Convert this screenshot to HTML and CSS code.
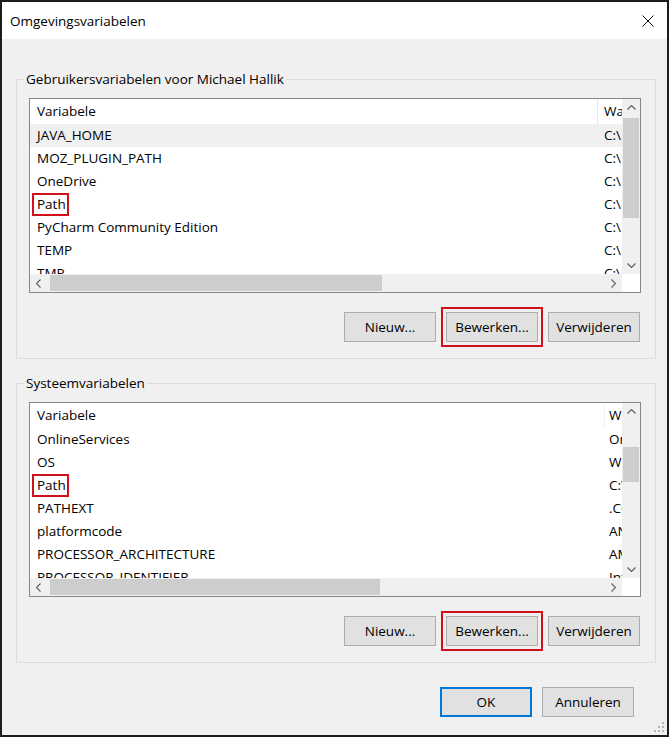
FILE: index.html
```html
<!DOCTYPE html>
<html lang="nl">
<head>
<meta charset="utf-8">
<title>Omgevingsvariabelen</title>
<link rel="stylesheet" href="styles.css">
</head>
<body>
<div class="window">
  <div class="titlebar">
    <span class="title">Omgevingsvariabelen</span>
    <svg class="close" width="12" height="12" viewBox="0 0 12 12"><path d="M0.5 0.5 L11.5 11.5 M11.5 0.5 L0.5 11.5" stroke="#111" stroke-width="1" fill="none"/></svg>
  </div>
  <div class="content">
    <fieldset class="group">
      <legend>Gebruikersvariabelen voor Michael Hallik</legend>
      <div class="list">
        <div class="list-body">
          <div class="row header user"><span class="c1">Variabele</span><span class="c2">Waarde</span></div>
          <div class="row user sel"><span class="c1">JAVA_HOME</span><span class="c2">C:\Program</span></div>
          <div class="row user"><span class="c1">MOZ_PLUGIN_PATH</span><span class="c2">C:\Program</span></div>
          <div class="row user"><span class="c1">OneDrive</span><span class="c2">C:\Users</span></div>
          <div class="row user"><span class="c1"><span class="mark">Path</span></span><span class="c2">C:\Users</span></div>
          <div class="row user"><span class="c1">PyCharm Community Edition</span><span class="c2">C:\Program</span></div>
          <div class="row user"><span class="c1">TEMP</span><span class="c2">C:\Users</span></div>
          <div class="row user"><span class="c1">TMP</span><span class="c2">C:\Users</span></div>
        </div>
        <div class="vscroll">
          <div class="arrow"><svg width="9" height="5" viewBox="0 0 9 5"><polyline points="0.5,4.5 4.5,0.5 8.5,4.5" fill="none" stroke="#606060" stroke-width="1.2"/></svg></div>
          <div class="vtrack"><div class="vthumb thumb-user"></div></div>
          <div class="arrow"><svg width="9" height="5" viewBox="0 0 9 5"><polyline points="0.5,0.5 4.5,4.5 8.5,0.5" fill="none" stroke="#606060" stroke-width="1.2"/></svg></div>
        </div>
        <div class="hscroll">
          <div class="arrow"><svg width="5" height="9" viewBox="0 0 5 9"><polyline points="4.5,0.5 0.5,4.5 4.5,8.5" fill="none" stroke="#606060" stroke-width="1.2"/></svg></div>
          <div class="htrack"><div class="hthumb thumb-h-user"></div></div>
          <div class="arrow"><svg width="5" height="9" viewBox="0 0 5 9"><polyline points="0.5,0.5 4.5,4.5 0.5,8.5" fill="none" stroke="#606060" stroke-width="1.2"/></svg></div>
        </div>
        <div class="corner"></div>
      </div>
      <div class="btnrow">
        <button class="btn">Nieuw...</button>
        <button class="btn marked">Bewerken...</button>
        <button class="btn">Verwijderen</button>
      </div>
    </fieldset>

    <fieldset class="group group-sys">
      <legend>Systeemvariabelen</legend>
      <div class="list">
        <div class="list-body">
          <div class="row header sys"><span class="c1">Variabele</span><span class="c2">Waarde</span></div>
          <div class="row sys"><span class="c1">OnlineServices</span><span class="c2">Online</span></div>
          <div class="row sys"><span class="c1">OS</span><span class="c2">Windows_NT</span></div>
          <div class="row sys"><span class="c1"><span class="mark">Path</span></span><span class="c2">C:\WINDOWS</span></div>
          <div class="row sys"><span class="c1">PATHEXT</span><span class="c2">.COM;.EXE</span></div>
          <div class="row sys"><span class="c1">platformcode</span><span class="c2">AN</span></div>
          <div class="row sys"><span class="c1">PROCESSOR_ARCHITECTURE</span><span class="c2">AMD64</span></div>
          <div class="row sys"><span class="c1">PROCESSOR_IDENTIFIER</span><span class="c2">Intel64</span></div>
        </div>
        <div class="vscroll">
          <div class="arrow"><svg width="9" height="5" viewBox="0 0 9 5"><polyline points="0.5,4.5 4.5,0.5 8.5,4.5" fill="none" stroke="#606060" stroke-width="1.2"/></svg></div>
          <div class="vtrack"><div class="vthumb thumb-sys"></div></div>
          <div class="arrow"><svg width="9" height="5" viewBox="0 0 9 5"><polyline points="0.5,0.5 4.5,4.5 8.5,0.5" fill="none" stroke="#606060" stroke-width="1.2"/></svg></div>
        </div>
        <div class="hscroll">
          <div class="arrow"><svg width="5" height="9" viewBox="0 0 5 9"><polyline points="4.5,0.5 0.5,4.5 4.5,8.5" fill="none" stroke="#606060" stroke-width="1.2"/></svg></div>
          <div class="htrack"><div class="hthumb thumb-h-sys"></div></div>
          <div class="arrow"><svg width="5" height="9" viewBox="0 0 5 9"><polyline points="0.5,0.5 4.5,4.5 0.5,8.5" fill="none" stroke="#606060" stroke-width="1.2"/></svg></div>
        </div>
        <div class="corner"></div>
      </div>
      <div class="btnrow">
        <button class="btn">Nieuw...</button>
        <button class="btn marked">Bewerken...</button>
        <button class="btn">Verwijderen</button>
      </div>
    </fieldset>

    <div class="dialog-buttons">
      <button class="btn default">OK</button>
      <button class="btn">Annuleren</button>
    </div>
  </div>
  <svg class="grip" width="10" height="10" viewBox="0 0 10 10">
    <rect x="8" y="0" width="2" height="2" fill="#b5b5b5"/>
    <rect x="4" y="4" width="2" height="2" fill="#b5b5b5"/>
    <rect x="8" y="4" width="2" height="2" fill="#b5b5b5"/>
    <rect x="0" y="8" width="2" height="2" fill="#b5b5b5"/>
    <rect x="4" y="8" width="2" height="2" fill="#b5b5b5"/>
    <rect x="8" y="8" width="2" height="2" fill="#b5b5b5"/>
  </svg>
</div>
</body>
</html>
```

FILE: styles.css
```css
* { box-sizing: border-box; }

html, body {
  margin: 0;
  padding: 0;
  background: #ffffff;
}

body {
  font-family: "Segoe UI", "Open Sans", "Noto Sans", sans-serif;
  font-size: 13.5px;
  color: #000;
}

.window {
  position: relative;
  width: 669px;
  height: 737px;
  border: 2px solid #1c1c1c;
  background: #f0f0f0;
  display: flex;
  flex-direction: column;
}

.titlebar {
  height: 37px;
  flex: 0 0 37px;
  background: #ffffff;
  display: flex;
  align-items: center;
  justify-content: space-between;
  padding: 0 13px 0 8px;
}

.title {
  font-size: 13.5px;
}

.close {
  display: block;
}

.content {
  padding: 31px 11px 0 14px;
  display: flex;
  flex-direction: column;
}

.group {
  margin: 0;
  border: 1px solid #dcdcdc;
  padding: 10px 14px 16px 12px;
  min-inline-size: 0;
}

.group-sys {
  margin-top: 15px;
}

.group legend {
  padding: 0 2px;
  margin-left: -5px;
  line-height: 18px;
  height: 18px;
}

.list {
  height: 195px;
  border: 1px solid #828790;
  background: #ffffff;
  display: grid;
  grid-template-columns: 1fr 18px;
  grid-template-rows: 1fr 18px;
}

.list-body {
  overflow: hidden;
  min-width: 0;
}

.row {
  display: grid;
  height: 23px;
  line-height: 23px;
  white-space: nowrap;
}

.row.user { grid-template-columns: 568px 1fr; }
.row.sys { grid-template-columns: 575px 1fr; }

.row.header {
  height: 25px;
  line-height: 24px;
}

.row.sel {
  background: #f0f0f0;
}

.c1 {
  padding-left: 7px;
  overflow: hidden;
}

.c2 {
  padding-left: 6px;
  overflow: hidden;
}

.sys .c2 {
  padding-left: 4px;
}

.header .c1 {
  border-right: 1px solid #e5e5e5;
}

.header.sys .c1 {
  border-right-color: #f0f0f0;
}

.mark {
  display: inline-block;
  height: 23px;
  line-height: 19px;
  margin-left: -5px;
  padding: 0 1px 0 3px;
  border: 2px solid #d2101c;
}

.vscroll {
  background: #f0f0f0;
  display: flex;
  flex-direction: column;
}

.vscroll .arrow {
  height: 17px;
  flex: 0 0 17px;
  display: flex;
  align-items: center;
  justify-content: center;
}

.vtrack {
  flex: 1;
  padding: 0 1px;
}

.vthumb {
  background: #cdcdcd;
}

.thumb-user { margin-top: 2px; height: 100px; }
.thumb-sys { margin-top: 27px; height: 35px; }

.hscroll {
  background: #f0f0f0;
  display: flex;
}

.hscroll .arrow {
  width: 17px;
  flex: 0 0 17px;
  display: flex;
  align-items: center;
  justify-content: center;
}

.htrack {
  flex: 1;
  padding: 1px 0;
}

.hthumb {
  height: 100%;
  background: #cdcdcd;
}

.thumb-h-user { margin-left: 3px; width: 332px; }
.thumb-h-sys { margin-left: 3px; width: 330px; }

.corner {
  background: #ffffff;
}

.btnrow {
  margin-top: 19px;
  display: flex;
  justify-content: flex-end;
  gap: 10px;
  padding-right: 1px;
}

.btn {
  font-family: inherit;
  font-size: 13.5px;
  color: #000;
  width: 92px;
  height: 30px;
  background: #e1e1e1;
  border: 1px solid #adadad;
  padding: 0;
  margin: 0;
}

.btn.marked {
  outline: 2px solid #d2101c;
  outline-offset: 3px;
}

.btn.default {
  border: 2px solid #0078d7;
}

.dialog-buttons {
  margin-top: 24px;
  display: flex;
  justify-content: flex-end;
  gap: 10px;
  padding-right: 22px;
}

.grip {
  position: absolute;
  right: 3px;
  bottom: 3px;
}
```
